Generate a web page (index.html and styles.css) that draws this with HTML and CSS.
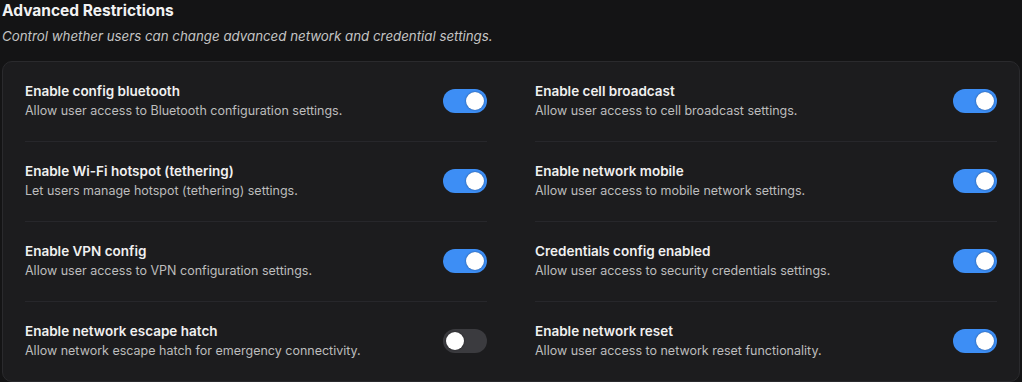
FILE: index.html
```html
<!DOCTYPE html>
<html lang="en">
<head>
<meta charset="utf-8">
<title>Advanced Restrictions</title>
<link rel="stylesheet" href="styles.css">
</head>
<body>
<section class="section">
  <header class="section-head">
    <h2 class="section-title">Advanced Restrictions</h2>
    <p class="section-sub">Control whether users can change advanced network and credential settings.</p>
  </header>
  <div class="card">
    <div class="grid">
      <div class="row">
        <div class="text"><div class="label">Enable config bluetooth</div><div class="desc">Allow user access to Bluetooth configuration settings.</div></div>
        <span class="toggle on"><span class="knob"></span></span>
      </div>
      <div class="row">
        <div class="text"><div class="label">Enable cell broadcast</div><div class="desc">Allow user access to cell broadcast settings.</div></div>
        <span class="toggle on"><span class="knob"></span></span>
      </div>
      <div class="row">
        <div class="text"><div class="label">Enable Wi-Fi hotspot (tethering)</div><div class="desc">Let users manage hotspot (tethering) settings.</div></div>
        <span class="toggle on"><span class="knob"></span></span>
      </div>
      <div class="row">
        <div class="text"><div class="label">Enable network mobile</div><div class="desc">Allow user access to mobile network settings.</div></div>
        <span class="toggle on"><span class="knob"></span></span>
      </div>
      <div class="row">
        <div class="text"><div class="label">Enable VPN config</div><div class="desc">Allow user access to VPN configuration settings.</div></div>
        <span class="toggle on"><span class="knob"></span></span>
      </div>
      <div class="row">
        <div class="text"><div class="label">Credentials config enabled</div><div class="desc">Allow user access to security credentials settings.</div></div>
        <span class="toggle on"><span class="knob"></span></span>
      </div>
      <div class="row last">
        <div class="text"><div class="label">Enable network escape hatch</div><div class="desc">Allow network escape hatch for emergency connectivity.</div></div>
        <span class="toggle"><span class="knob"></span></span>
      </div>
      <div class="row last">
        <div class="text"><div class="label">Enable network reset</div><div class="desc">Allow user access to network reset functionality.</div></div>
        <span class="toggle on"><span class="knob"></span></span>
      </div>
    </div>
  </div>
</section>
</body>
</html>
```
FILE: styles.css
```css
html, body {
  margin: 0;
  padding: 0;
  background: #141415;
}
body {
  font-family: Inter, "Noto Sans", sans-serif;
  color: #ececec;
  padding: 0 2px;
}
.section-head {
  padding-top: 1px;
}
.section-title {
  margin: 0;
  font-size: 15.5px;
  line-height: 20px;
  font-weight: 700;
  color: #f2f2f2;
}
.section-sub {
  margin: 6px 0 0;
  font-size: 13.3px;
  line-height: 18px;
  font-style: italic;
  color: #c4c4c4;
}
.card {
  margin-top: 16px;
  background: #1c1c1e;
  border: 1px solid #2a2a2d;
  border-radius: 10px;
  padding: 0 22px;
}
.grid {
  display: grid;
  grid-template-columns: 1fr 1fr;
  column-gap: 48px;
}
.row {
  display: flex;
  align-items: center;
  justify-content: space-between;
  padding: 19px 0 20px;
  border-bottom: 1px solid #27272b;
  height: 40px;
}
.row.last {
  border-bottom: none;
}
.label {
  font-size: 13.5px;
  font-weight: 600;
  line-height: 20px;
  color: #f0f0f0;
}
.desc {
  font-size: 12.5px;
  line-height: 20px;
  color: #bdbdbd;
}
.toggle {
  width: 44px;
  height: 24px;
  border-radius: 12px;
  background: #3b3b3f;
  display: flex;
  align-items: center;
  padding: 0 3px;
  box-sizing: border-box;
  flex-shrink: 0;
}
.toggle.on {
  background: #3d8ef5;
  justify-content: flex-end;
}
.knob {
  width: 18px;
  height: 18px;
  border-radius: 50%;
  background: #ffffff;
  box-shadow: 0 0 2px rgba(0, 0, 0, 0.5);
}
```
